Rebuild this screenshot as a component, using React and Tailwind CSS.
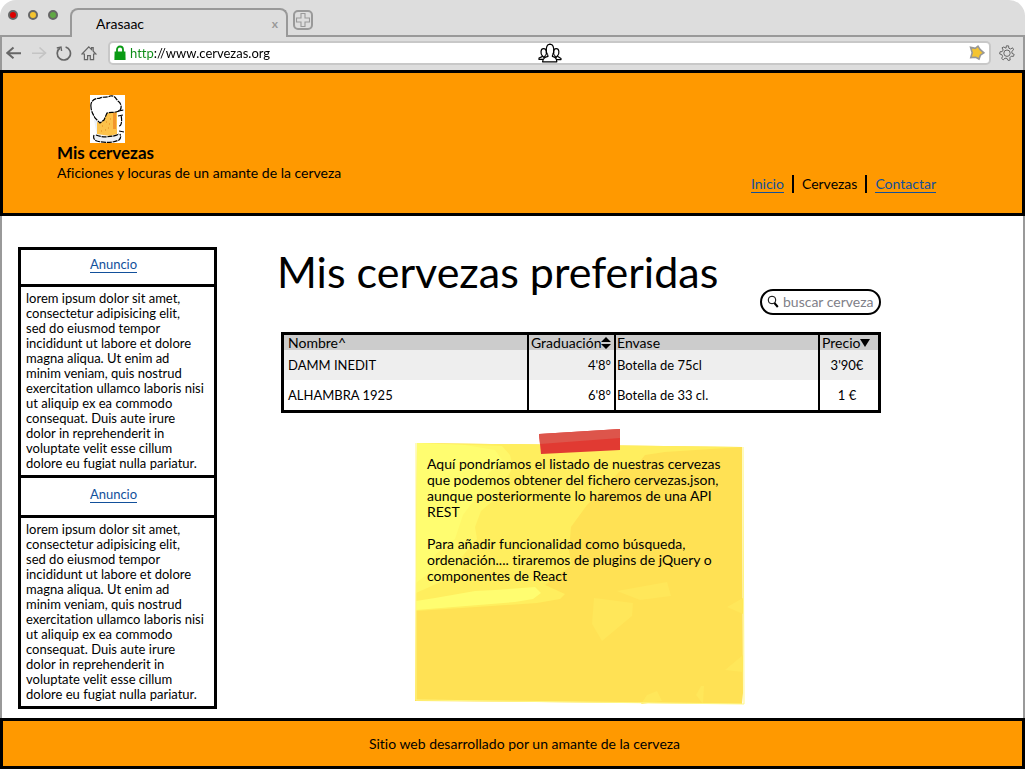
const AD_LINES = [
  'lorem ipsum dolor sit amet,',
  'consectetur adipisicing elit,',
  'sed do eiusmod tempor',
  'incididunt ut labore et dolore',
  'magna aliqua. Ut enim ad',
  'minim veniam, quis nostrud',
  'exercitation ullamco laboris nisi',
  'ut aliquip ex ea commodo',
  'consequat. Duis aute irure',
  'dolor in reprehenderit in',
  'voluptate velit esse cillum',
  'dolore eu fugiat nulla pariatur.',
];

const BEERS = [
  { name: 'DAMM INEDIT', grade: "4'8°", pack: 'Botella de 75cl', price: "3'90€" },
  { name: 'ALHAMBRA 1925', grade: "6'8°", pack: 'Botella de 33 cl.', price: '1 €' },
];

function BackIcon() {
  return (
    <svg viewBox="0 0 16 14" className="h-3.5 w-4" fill="none" stroke="currentColor" strokeWidth="2">
      <path d="M15 7.2 2 7M7.5 1.5 1.2 7l6.3 5.3" />
    </svg>
  );
}

function ForwardIcon() {
  return (
    <svg viewBox="0 0 16 14" className="h-3.5 w-4" fill="none" stroke="currentColor" strokeWidth="1.6">
      <path d="M1 7.2 14 7M8.5 1.5 14.5 7l-6.3 5.3" />
    </svg>
  );
}

function ReloadIcon() {
  return (
    <svg viewBox="0 0 16 16" className="size-4" fill="none" stroke="currentColor" strokeWidth="1.7">
      <path d="M9.6 2A6.6 6.6 0 1 1 4 3" />
      <path d="M.8 3 5 2 5.6 6" strokeWidth="1.4" />
    </svg>
  );
}

function HomeIcon() {
  return (
    <svg viewBox="0 0 16 16" className="size-4" fill="none" stroke="currentColor" strokeWidth="1.2">
      <path d="M1 9 7.8 1.8 10.6 4.6V2.6h1.6v3.6L15 9h-2.4v5.6H9.3v-4H6.6v4H3.4V9z" />
    </svg>
  );
}

function LockIcon() {
  return (
    <svg viewBox="0 0 12 16" className="h-4 w-3 shrink-0">
      <path d="M3 7V4.5a3 3 0 0 1 6 0V7" fill="none" stroke="#0a9b14" strokeWidth="1.8" />
      <path d="M.6 6.6h10.8l.2 8.4H.4z" fill="#0a9b14" />
    </svg>
  );
}

function StarIcon() {
  return (
    <svg viewBox="0 0 16 16" className="size-4" fill="#f4c430" stroke="#979797" strokeWidth="1.6">
      <path d="M1.6 2.4 6.2 3.4 9 1.2 11 4.4 14.8 7.8 11.4 10.2 10 14 6.8 12.2 1.8 12.6 3.2 7.8z" />
    </svg>
  );
}

function GearIcon() {
  return (
    <svg viewBox="0 0 16 16" className="size-4" fill="none" stroke="currentColor" strokeWidth="1">
      <circle cx="8" cy="8.2" r="3.2" />
      <path d="M7 3.2 7.4.8 9.6.9 9.8 3.2 11.6 4 13.6 2.8 14.6 4.8 12.8 6.4 13 8.4 15.2 9.4 14.4 11.4 12.2 11.2 10.8 12.8 11.2 15 9.2 15.5 8 13.4 6 13.2 4.2 14.8 2.6 13.4 3.6 11.4 2.8 9.6.7 9 1 6.8 3.2 6.6 4.2 5 3 2.8 4.8 2z" />
    </svg>
  );
}

function PeopleIcon() {
  return (
    <svg viewBox="0 0 24 20" className="h-5 w-6" fill="none" stroke="#000" strokeWidth="1.2" strokeLinejoin="round">
      <path d="M9.6 11.6C7.6 9.6 7.4 1.4 12 1.2 16.6 1.4 16.4 9.6 14.6 11.6" />
      <path d="M9.6 11.6 10 13.4C6 14.4 5 15.6 4.6 18.8H18.8C18.6 15.6 18 14.4 14.4 13.4L14.6 11.6" />
      <path d="M7.4 12.6C9 11 9 5.6 5.6 5.6 2.2 5.6 2.6 11 4.2 12.6L4.2 13.6 1 15V16.4H5" />
      <path d="M4.2 12.6 6 14.6 7.4 12.6" />
      <path d="M16.6 12.6C15 11 15 5.6 18.2 5.6 21.6 5.6 21.4 11 19.6 12.6L19.8 13.6 23 15.4V16.6H18.6" />
      <path d="M16.6 12.6 18 14.6 19.6 12.6" />
    </svg>
  );
}

function SearchIcon() {
  return (
    <svg viewBox="0 0 12 14" className="h-3.5 w-3 shrink-0" fill="none" stroke="#000">
      <circle cx="5" cy="5" r="3.8" strokeWidth="1" />
      <path d="M7.4 8 10.8 12" strokeWidth="2" />
    </svg>
  );
}

function BeerLogo() {
  return (
    <svg viewBox="0 0 35 48" className="h-12 w-[35px] bg-white" role="img" aria-label="Jarra de cerveza">
      <path d="M4 25 7 41 27 40 27 16 17 18 12 27z" fill="#edf2f8" />
      <path d="M7 27 10 28 15 19 27 16 27 39 20 41 7 39z" fill="#fcc24a" />
      <path d="M23 18h3v16h-3z" fill="#f2962c" />
      <path d="M5 39C10 43 25 42 30 39L30 44C23 48 10 48 4 45z" fill="#eef1f5" />
      <path d="M1 12C0 6 5 3 9 3.5 13 1 18 3 20 1 25 0 26 4 28 6 32 9 32 14 29 16 25 18 21 17 17 18L14 25 10 28 5 23C3 19 1 16 1 12z" fill="#fff" stroke="#000" strokeWidth="1.2" strokeDasharray="5 .8" />
      <path d="M28 16 34 15M34 37 29 36M28 21 33 20M29 31C32 31 32 24 31 20M4 40C3 43 4 45 7 46 14 48 23 48 29 45 31 43 31 41 30 39M6 40C12 43 24 42 29 39" fill="none" stroke="#000" strokeWidth="1.2" strokeDasharray="5 .8" />
      <path d="M12 31h1M16 27h1M18 33h1M11 36h1M15 35h1M19 29h1M20 24h1" stroke="#e5861d" />
    </svg>
  );
}

function AdCard() {
  return (
    <article className="group">
      <header className="flex h-[37px] items-center justify-center border-x-3 border-t-3 border-black pr-2 pb-1 group-not-first:border-t-0">
        <a href="#anuncio" className="border-b border-[#12509b] text-[#12509b]">Anuncio</a>
      </header>
      <p className="border-3 border-black py-1 pl-[5px] whitespace-pre-line">{AD_LINES.join('\n')}</p>
    </article>
  );
}

function BrowserChrome() {
  return (
    <div className="rounded-t-2xl bg-[#ddd] text-black">
      <div className="flex h-[37px] items-end">
        <div className="flex h-full w-[70px] shrink-0 gap-[10px] border-b-2 border-[#999] pt-[10px] pl-2">
          <button aria-label="Cerrar ventana" className="size-[10px] rounded-full border-2 border-[#666] bg-[#d00]" />
          <button aria-label="Minimizar" className="size-[10px] rounded-full border-2 border-[#666] bg-[#f4c430]" />
          <button aria-label="Maximizar" className="size-[10px] rounded-full border-2 border-[#666] bg-[#60a844]" />
        </div>
        <div className="flex h-[29px] w-[218px] shrink-0 items-center justify-between rounded-t-lg border-x-2 border-t-2 border-[#999] pr-2 pl-6">
          <span>Arasaac</span>
          <button aria-label="Cerrar pestaña" className="text-xs font-bold text-[#999]">x</button>
        </div>
        <div className="h-full flex-1 border-b-2 border-[#999] pt-[10px] pl-[5px]">
          <button aria-label="Nueva pestaña" className="flex size-5 items-center justify-center rounded-[5px] border-2 border-[#999]">
            <svg viewBox="0 0 16 16" className="size-4 shrink-0" fill="none" stroke="#999" strokeWidth="1.1">
              <path d="M6 1.5H10V6H14.5V10H10V14.5H6V10H1.5V6H6z" />
            </svg>
          </button>
        </div>
      </div>
      <div className="flex h-[33px] items-center border-x-2 border-[#999] pr-2 pb-px pl-1 text-[#666]">
        <button aria-label="Atrás" className="mr-[9px]"><BackIcon /></button>
        <button aria-label="Adelante" className="mr-[9px] text-[#c4c4c4]"><ForwardIcon /></button>
        <button aria-label="Recargar" className="mr-[9px]"><ReloadIcon /></button>
        <button aria-label="Inicio del navegador" className="mr-[11px]"><HomeIcon /></button>
        <div className="flex h-6 flex-1 items-center rounded-[5px] border-2 border-[#c8c8c8] bg-white px-1">
          <div className="flex flex-1 items-center gap-1">
            <LockIcon />
            <input
              type="text"
              aria-label="Dirección"
              defaultValue="http://www.cervezas.org"
              className="w-0 flex-1 bg-linear-to-r from-[#0a8b14] from-[24px] to-black to-[24px] bg-clip-text text-[13px] text-transparent caret-black outline-none"
            />
          </div>
          <PeopleIcon />
          <div className="flex flex-1 justify-end">
            <button aria-label="Favorito"><StarIcon /></button>
          </div>
        </div>
        <button aria-label="Ajustes" className="ml-2"><GearIcon /></button>
      </div>
    </div>
  );
}

function SortHead({ label, children }) {
  return (
    <button className="flex items-center whitespace-nowrap">
      {label}
      {children}
    </button>
  );
}

function BeerTable() {
  return (
    <div className="border-3 border-black">
      <table className="w-full table-fixed border-separate border-spacing-0 text-left">
        <colgroup>
          <col />
          <col className="w-[87px]" />
          <col className="w-[204px]" />
          <col className="w-[60px]" />
        </colgroup>
        <thead className="leading-[15px]">
          <tr className="bg-[#ccc]">
            <th className="p-0 pl-1 font-normal"><SortHead label="Nombre^" /></th>
            <th className="border-l-2 border-black p-0 pl-[2px] font-normal">
              <SortHead label="Graduación">
                <svg viewBox="0 0 10 12" className="h-3 w-[10px]"><path d="M0 5 5 0l5 5zM0 7h10l-5 5z" /></svg>
              </SortHead>
            </th>
            <th className="border-l-2 border-black p-0 pl-px font-normal"><SortHead label="Envase" /></th>
            <th className="border-l-2 border-black p-0 pl-[2px] font-normal">
              <SortHead label="Precio">
                <svg viewBox="0 0 10 10" className="size-[10px]"><path d="M0 1h10L5 9z" /></svg>
              </SortHead>
            </th>
          </tr>
        </thead>
        <tbody className="text-[13px]">
          {BEERS.map((beer) => (
            <tr key={beer.name} className="h-[30px] odd:bg-[#eee]">
              <td className="p-0 pl-1">{beer.name}</td>
              <td className="border-l-2 border-black p-0 pr-[3px] text-right">{beer.grade}</td>
              <td className="border-l-2 border-black p-0 pl-px">{beer.pack}</td>
              <td className="border-l-2 border-black p-0 pr-1 text-center">{beer.price}</td>
            </tr>
          ))}
        </tbody>
      </table>
    </div>
  );
}

function StickyNote() {
  return (
    <div className="relative h-[262px] w-[330px] pt-[13px] pr-5 pl-3">
      <svg viewBox="0 0 330 262" preserveAspectRatio="none" className="absolute inset-0 size-full">
        <path d="M2 0 327 4 328 250 327 261 0 258 1 130z" fill="#ffe154" />
        <path d="M2 0 327 4 250 9 230 12 222 22 205 28 190 44 172 62 156 84 154 108 157 122 130 142 150 151 145 156 122 160 1 168z" fill="#ffee5e" />
        <path d="M2 0 87 3 95 12 98 24 80 56 66 68 60 84 62 96 45 116 48 132 28 138 1 150z" fill="#fff769" />
        <path d="M2 0 50 2 80 7 88 18 74 30 60 56 48 72 40 96 20 112 14 130 1 140z" fill="#fffd70" />
        <path d="M20 155 60 148 80 147 120 144 126 150 118 156 100 159 1 167V158z" fill="#fffd70" />
        <path d="M179 155 218 160 217 173 187 198 177 181zM202 148 252 139 256 153 225 157zM232 252 242 248 247 258 226 261zM281 252 286 243 289 243 288 261zM310 227 328 212V229zM312 164 328 155V171z" fill="#ffe75a" />
        <path d="M1 0V257L329 261 328 4" fill="none" stroke="#fff684" />
      </svg>
      <svg viewBox="0 0 83 27" className="absolute -top-[15px] left-[123px] h-[27px] w-[83px]">
        <path d="M1 6 82 1 82 22 3 26z" fill="#e13a32" />
        <path d="M1 6 82 1 82 10 2 16z" fill="#dd554b" />
      </svg>
      <div className="relative flex flex-col gap-4">
        <p>
          Aquí pondríamos el listado de nuestras cervezas que podemos obtener del fichero cervezas.json, aunque
          posteriormente lo haremos de una API REST
        </p>
        <p>
          Para añadir funcionalidad como búsqueda, ordenación.... tiraremos de plugins de jQuery o componentes de React
        </p>
      </div>
    </div>
  );
}

export default function App() {
  return (
    <div className="flex min-h-screen flex-col bg-white font-[Lato,sans-serif] text-[14px] leading-4 text-black [font-variant-ligatures:none]">
      <BrowserChrome />
      <header className="flex h-[146px] items-start justify-between border-3 border-black bg-[#ff9900] pr-[86px] pl-[54px]">
        <div className="flex flex-col pt-[22px]">
          <div className="pl-[33px]"><BeerLogo /></div>
          <p className="text-[17px] leading-5 font-bold">Mis cervezas</p>
          <p className="leading-5">Aficiones y locuras de un amante de la cerveza</p>
        </div>
        <nav className="flex items-center pt-[102px]">
          <a href="#inicio" className="border-b border-[#12509b] text-[#12509b]">Inicio</a>
          <span className="mx-2 h-[18px] border-l-2 border-black" />
          <a href="#cervezas" aria-current="page">Cervezas</a>
          <span className="mx-2 h-[18px] border-l-2 border-black" />
          <a href="#contactar" className="border-b border-[#12509b] text-[#12509b]">Contactar</a>
        </nav>
      </header>
      <div className="flex flex-1 items-start gap-[60px] border-x-2 border-[#999] pt-[31px] pr-[142px] pb-[9px] pl-4">
        <aside className="w-[199px] shrink-0 text-[13px] leading-[15px]">
          <AdCard />
          <AdCard />
        </aside>
        <main className="min-w-0 flex-1">
          <h1 className="text-[43px] leading-[50px]">Mis cervezas preferidas</h1>
          <div className="-mt-2 flex justify-end">
            <label className="flex h-[26px] w-[121px] items-center gap-1 rounded-full border-2 border-black pl-[5px]">
              <SearchIcon />
              <input
                type="text"
                aria-label="Buscar cerveza"
                placeholder="buscar cerveza"
                className="w-0 flex-1 outline-none placeholder:text-[#808088]"
              />
            </label>
          </div>
          <div className="mt-[17px] pl-1"><BeerTable /></div>
          <div className="mt-[30px] flex pl-[138px]"><StickyNote /></div>
        </main>
      </div>
      <footer className="flex h-[51px] items-center justify-center border-3 border-black bg-[#ff9900] pl-6">
        Sitio web desarrollado por un amante de la cerveza
      </footer>
    </div>
  );
}
